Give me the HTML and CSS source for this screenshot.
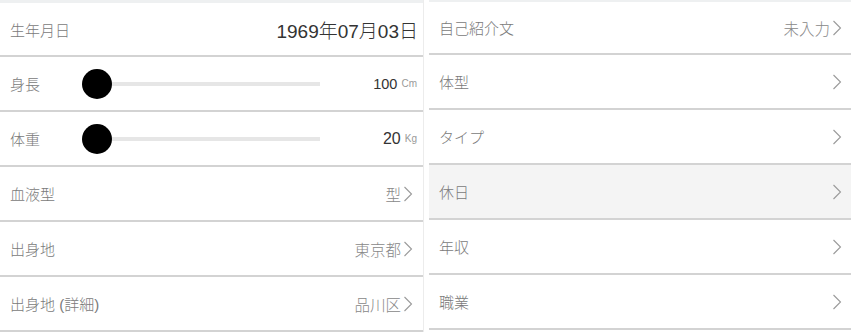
FILE: index.html
```html
<!DOCTYPE html>
<html lang="ja">
<head>
<meta charset="utf-8">
<title>プロフィール</title>
<link rel="stylesheet" href="styles.css">
</head>
<body>
<div class="page">
  <section class="panel panel-left">
    <div class="strip strip-left"></div>
    <div class="row row-first-left">
      <span class="label">生年月日</span>
      <span class="date">1969年07月03日</span>
    </div>
    <div class="row">
      <span class="label slabel">身長</span>
      <div class="slider"><div class="track"></div><div class="thumb"></div></div>
      <span class="spacer"></span>
      <span class="num num-height">100</span><span class="unit">Cm</span>
    </div>
    <div class="row">
      <span class="label slabel">体重</span>
      <div class="slider"><div class="track"></div><div class="thumb"></div></div>
      <span class="spacer"></span>
      <span class="num num-weight">20</span><span class="unit">Kg</span>
    </div>
    <div class="row">
      <span class="label">血液型</span>
      <span class="value">型<svg class="chev" viewBox="0 0 10 16" width="10" height="16"><path d="M1.5 1 L8.5 8 L1.5 15" /></svg></span>
    </div>
    <div class="row">
      <span class="label">出身地</span>
      <span class="value">東京都<svg class="chev" viewBox="0 0 10 16" width="10" height="16"><path d="M1.5 1 L8.5 8 L1.5 15" /></svg></span>
    </div>
    <div class="row">
      <span class="label">出身地 (詳細)</span>
      <span class="value">品川区<svg class="chev" viewBox="0 0 10 16" width="10" height="16"><path d="M1.5 1 L8.5 8 L1.5 15" /></svg></span>
    </div>
  </section>
  <section class="panel panel-right">
    <div class="strip strip-right"></div>
    <div class="row row-first-right">
      <span class="label">自己紹介文</span>
      <span class="value">未入力<svg class="chev" viewBox="0 0 10 16" width="10" height="16"><path d="M1.5 1 L8.5 8 L1.5 15" /></svg></span>
    </div>
    <div class="row">
      <span class="label">体型</span>
      <span class="value"><svg class="chev" viewBox="0 0 10 16" width="10" height="16"><path d="M1.5 1 L8.5 8 L1.5 15" /></svg></span>
    </div>
    <div class="row">
      <span class="label">タイプ</span>
      <span class="value"><svg class="chev" viewBox="0 0 10 16" width="10" height="16"><path d="M1.5 1 L8.5 8 L1.5 15" /></svg></span>
    </div>
    <div class="row row-active">
      <span class="label">休日</span>
      <span class="value"><svg class="chev" viewBox="0 0 10 16" width="10" height="16"><path d="M1.5 1 L8.5 8 L1.5 15" /></svg></span>
    </div>
    <div class="row">
      <span class="label">年収</span>
      <span class="value"><svg class="chev" viewBox="0 0 10 16" width="10" height="16"><path d="M1.5 1 L8.5 8 L1.5 15" /></svg></span>
    </div>
    <div class="row">
      <span class="label">職業</span>
      <span class="value"><svg class="chev" viewBox="0 0 10 16" width="10" height="16"><path d="M1.5 1 L8.5 8 L1.5 15" /></svg></span>
    </div>
  </section>
</div>
</body>
</html>
```

FILE: styles.css
```css
* { box-sizing: border-box; }

html, body {
  margin: 0;
  padding: 0;
  background: #ffffff;
}

body {
  font-family: "Liberation Sans", "Noto Sans CJK JP", sans-serif;
  font-weight: 300;
  color: #777777;
  width: 864px;
  height: 332px;
  overflow: hidden;
}

.page {
  display: flex;
  gap: 5px;
  align-items: flex-start;
}

.panel {
  display: flex;
  flex-direction: column;
}

.panel-left {
  width: 424px;
  border-right: 1px solid #ececec;
}

.panel-right {
  width: 422px;
}

.strip {
  background: #eef0f1;
}

.strip-left { height: 3px; }
.strip-right { height: 2px; }

.row {
  display: flex;
  align-items: center;
  height: 55px;
  border-bottom: 2px solid #d3d3d3;
  padding: 0 10px 0 10px;
}

.panel-right .row {
  padding: 0 9px 0 10px;
}

.row-first-left { height: 54px; }
.row-first-right { height: 53px; padding-bottom: 2px; }

.row-active {
  background: #f4f4f4;
}

.label {
  font-size: 15px;
  color: #7a7a7a;
  white-space: nowrap;
}

.slabel {
  width: 72px;
  flex: none;
}

.date {
  margin-left: auto;
  margin-right: -5px;
  font-size: 19px;
  color: #333333;
}

.value {
  margin-left: auto;
  display: flex;
  align-items: center;
  font-size: 15.5px;
  color: #888888;
}

.chev {
  display: block;
  margin-left: 2px;
  fill: none;
  stroke: #9a9a9a;
  stroke-width: 1.1;
}

.slider {
  position: relative;
  width: 238px;
  height: 30px;
  flex: none;
  display: flex;
  align-items: center;
}

.track {
  width: 100%;
  height: 4px;
  background: #e6e6e6;
}

.thumb {
  position: absolute;
  left: 0;
  top: 0;
  width: 30px;
  height: 30px;
  border-radius: 50%;
  background: #000000;
}

.spacer { flex: 1; }

.num {
  color: #333333;
}

.num-height { font-size: 14.5px; }
.num-weight { font-size: 16px; }

.unit {
  font-size: 10px;
  color: #999999;
  margin-left: 4px;
  margin-right: -4px;
}
```
